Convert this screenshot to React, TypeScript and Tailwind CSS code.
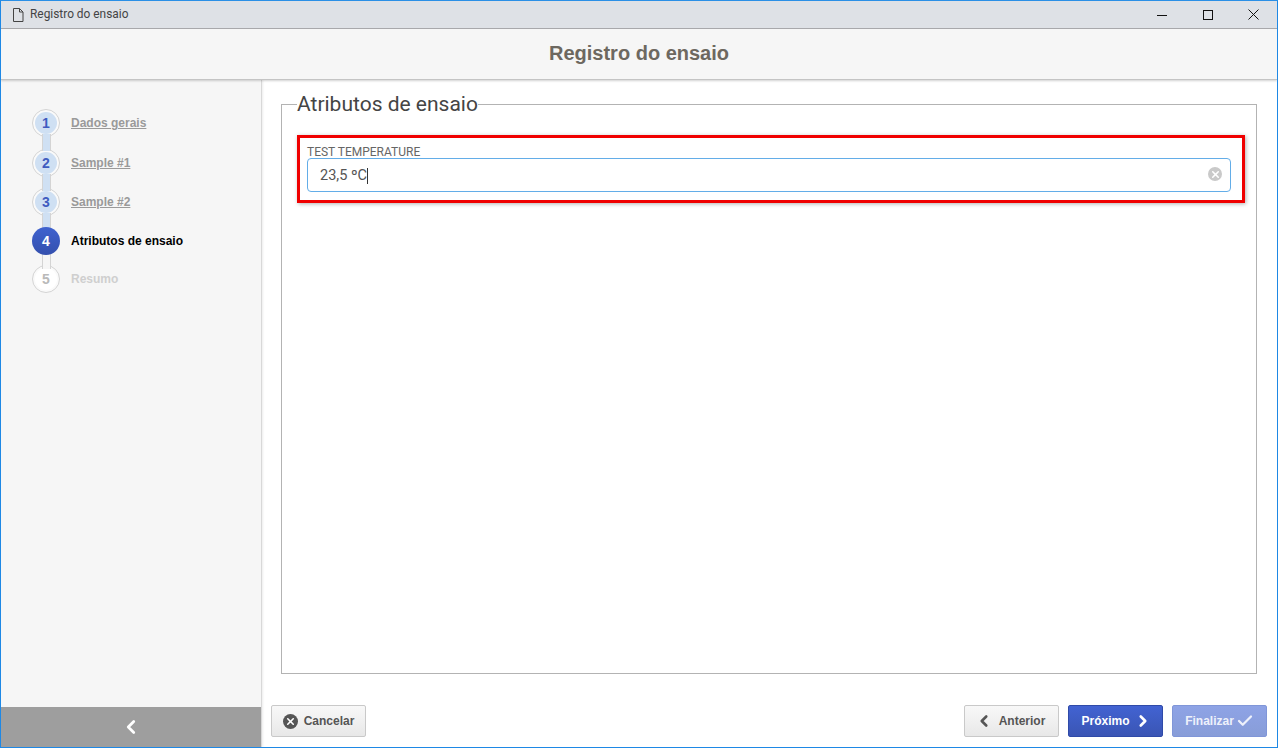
import { Check, ChevronLeft, ChevronRight, X } from "lucide-react";

const sans = "font-['Liberation_Sans',Arial,sans-serif]";
const roboto = "font-['Roboto','Liberation_Sans',sans-serif]";

type StepState = "done" | "active" | "todo";

const STEPS: { n: number; label: string; state: StepState; h: string; line?: string }[] = [
  { n: 1, label: "Dados gerais", state: "done", h: "h-[40px]", line: "bg-[#cfe0f3]" },
  { n: 2, label: "Sample #1", state: "done", h: "h-[39px]", line: "bg-[#cfe0f3]" },
  { n: 3, label: "Sample #2", state: "done", h: "h-[39px]", line: "bg-[#cfe0f3]" },
  { n: 4, label: "Atributos de ensaio", state: "active", h: "h-[38px]", line: "bg-[#f6f6f6]" },
  { n: 5, label: "Resumo", state: "todo", h: "h-[30px]" },
];

function Step({ n, label, state, h, line }: (typeof STEPS)[number]) {
  return (
    <div className={`relative flex items-start ${h}`}>
      {state === "active" ? (
        <div className="relative z-20 flex h-[28px] w-[28px] items-center justify-center rounded-full bg-gradient-to-b from-[#3f62cf] to-[#3450ae] text-[14px] font-bold text-white">
          {n}
        </div>
      ) : (
        <div className="relative flex h-[28px] w-[28px] items-center justify-center rounded-full border border-[#d4d4d4] bg-[#fafafa]">
          <div
            className={`flex h-[22px] w-[22px] items-center justify-center rounded-full text-[14px] font-bold ${
              state === "done" ? "bg-[#cfe0f3] text-[#3f5cc0]" : "bg-white text-[#b9b9b9]"
            }`}
          >
            {n}
          </div>
        </div>
      )}
      {line ? (
        <div className={`absolute left-[10px] top-[25px] z-10 h-[17px] w-[9px] border-x border-[#d4d4d4] ${line}`} />
      ) : null}
      <span
        className={`ml-[11px] mt-[7px] text-[12px] leading-[15px] font-bold ${
          state === "done"
            ? "text-[#9a9a9a] underline"
            : state === "active"
              ? "text-black"
              : "text-[#cfcfcf]"
        }`}
      >
        {label}
      </span>
    </div>
  );
}

export default function App() {
  return (
    <div className={`flex h-[748px] w-[1278px] flex-col overflow-hidden border border-[#1e88e5] border-t-[#2a8fe6] bg-white ${sans}`}>
      {/* title bar */}
      <div className="flex h-[28px] shrink-0 items-center border-b border-[#ababae] bg-[#dee1e6]">
        <svg className="ml-[11px]" width="12" height="14" viewBox="0 0 12 14" fill="none" stroke="#444" strokeWidth="1">
          <path d="M1.5 .5h6l3.5 3.5v9.5h-9.5z M7.5 .5v3.500h3.500" />
        </svg>
        <span className={`ml-[6px] mt-[1px] text-[11.9px] text-[#444] ${roboto}`}>Registro do ensaio</span>
        <div className="ml-auto flex items-center">
          <svg width="10" height="10" viewBox="0 0 10 10" className="mr-[36px]" stroke="#111" strokeWidth="1">
            <path d="M0 5.500h10" />
          </svg>
          <svg width="10" height="10" viewBox="0 0 10 10" className="mr-[35px]" fill="none" stroke="#111" strokeWidth="1">
            <rect x=".5" y=".5" width="9" height="9" />
          </svg>
          <svg width="11" height="11" viewBox="0 0 11 11" className="mr-[18px]" stroke="#111" strokeWidth="1">
            <path d="M.5 .5l10 10M10.500 .5l-10 10" />
          </svg>
        </div>
      </div>

      {/* header */}
      <div className="relative z-10 flex h-[51px] shrink-0 items-center justify-center border-b border-[#c4c4c4] bg-[#f6f6f6] pb-[2px] shadow-[0_1px_2px_rgba(0,0,0,0.18)]">
        <h1 className="text-[20px] font-bold text-[#6d6860]">Registro do ensaio</h1>
      </div>

      <div className="flex min-h-0 flex-1">
        {/* sidebar */}
        <aside className="flex w-[261px] shrink-0 flex-col border-r border-[#d8d8d8] bg-[#f6f6f6] shadow-[1px_0_2px_rgba(0,0,0,0.08)]">
          <div className="flex-1 pl-[31px] pt-[29px]">
            {STEPS.map((step) => (
              <Step key={step.n} {...step} />
            ))}
          </div>
          <div className="flex h-[40px] items-center justify-center bg-[#9e9e9e]">
            <ChevronLeft size={22} strokeWidth={3} className="text-white" />
          </div>
        </aside>

        {/* content */}
        <main className="flex min-w-0 flex-1 flex-col">
          <div className="flex-1 pl-[19px] pr-[20px] pt-[13px]">
            <fieldset className="h-[581px] border border-[#b3b3b3] pl-[15px] pr-[11px]">
              <legend className={`text-[21px] leading-[23px] text-[#444] ${roboto}`}>Atributos de ensaio</legend>
              <div className="mt-[19px] h-[68px] border-[3px] border-[#f00000] pl-[7px] pr-[11px] pt-[9px] shadow-[1px_1px_4px_rgba(0,0,0,0.3)]">
                <div className={`text-[12px] leading-[11px] text-[#666] ${roboto}`}>TEST TEMPERATURE</div>
                <div className={`relative flex h-[34px] items-center rounded-[4px] border border-[#63ade8] pl-[12px] pt-[1px] text-[14.5px] text-[#555] ${roboto}`}>
                  23,5 ºC
                  <span className="h-[16px] w-px bg-[#333]" />
                  <span className="absolute right-[8px] top-[8px] flex h-[14px] w-[14px] items-center justify-center rounded-full bg-[#c9c9c9]">
                    <X size={11} strokeWidth={3.5} className="text-white" />
                  </span>
                </div>
              </div>
            </fieldset>
          </div>

          {/* footer */}
          <div className="flex h-[42px] shrink-0 items-start pl-[9px] pr-[10px] text-[12px] font-bold">
            <button className="flex h-[32px] w-[95px] items-center justify-center rounded-[2px] border border-[#c9c9c9] bg-gradient-to-b from-[#f8f8f8] to-[#e8e8e8] text-[#555]">
              <span className="mr-[6px] flex h-[15px] w-[15px] items-center justify-center rounded-full bg-[#555]">
                <X size={11} strokeWidth={3.5} className="text-white" />
              </span>
              Cancelar
            </button>
            <button className="ml-auto flex h-[32px] w-[95px] items-center justify-center rounded-[2px] border border-[#c9c9c9] bg-gradient-to-b from-[#f8f8f8] to-[#e8e8e8] pr-[3px] text-[#555]">
              <ChevronLeft size={18} strokeWidth={3.5} className="mr-[6px] text-[#555]" />
              Anterior
            </button>
            <button className="ml-[9px] flex h-[32px] w-[95px] items-center justify-center rounded-[2px] border border-[#2f4aa8] bg-gradient-to-b from-[#4263d2] to-[#3a55b4] pl-[2px] text-white">
              Próximo
              <ChevronRight size={18} strokeWidth={3.5} className="ml-[4px]" />
            </button>
            <button className="ml-[9px] flex h-[32px] w-[95px] items-center justify-center rounded-[2px] border border-[#8096d8] bg-gradient-to-b from-[#8ea3e6] to-[#889dd8] text-[#eef1fb]">
              Finalizar
              <Check size={18} strokeWidth={3} className="ml-[2px]" />
            </button>
          </div>
        </main>
      </div>
    </div>
  );
}
